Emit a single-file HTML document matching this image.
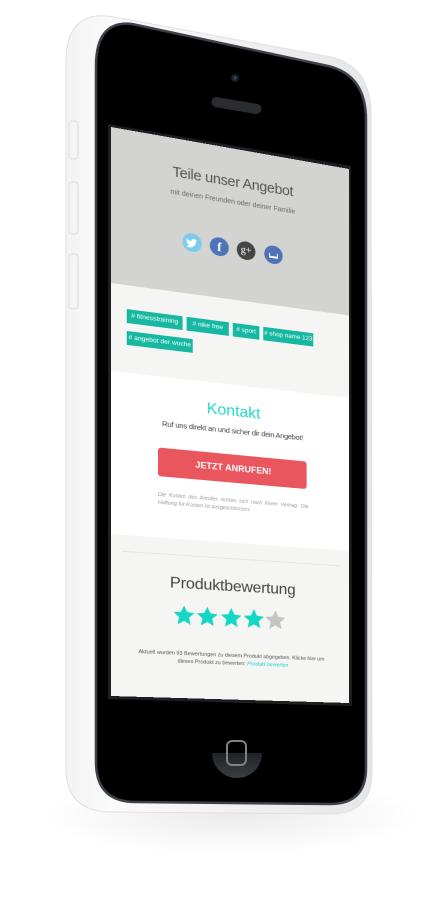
<!DOCTYPE html>
<html><head><meta charset="utf-8"><style>
html,body{margin:0;padding:0;background:#fff;width:431px;height:900px;overflow:hidden;font-family:"Liberation Sans",sans-serif}
#ph{position:absolute;left:0;top:0}
#scr{position:absolute;left:0;top:0;width:240px;height:569px;transform-origin:0 0;
transform:matrix3d(1.08698,0.22115,0,0.00027308,0,1,0,0,0,0,1,0,111,127,0,1);overflow:hidden;background:#f5f5f3}
.sec{position:absolute;left:0;width:240px}
.c{position:absolute;left:0;width:240px;text-align:center;white-space:nowrap}
.ic{position:absolute;width:19px;height:19px;border-radius:50%;top:94px;color:#fff;text-align:center;font-size:12px;line-height:19px;font-weight:bold}
.tag{position:absolute;height:14px;background:#16b8a2;color:#fff;font-size:6.5px;line-height:14px;text-align:center;white-space:nowrap}
.st{position:absolute;top:473px;width:23px;height:23px}
</style></head><body>
<svg id="ph" width="431" height="900" viewBox="0 0 431 900">
<defs>
<radialGradient id="sh" cx="0.5" cy="0.5" r="0.5"><stop offset="0" stop-color="#000" stop-opacity="0.08"/><stop offset="1" stop-color="#000" stop-opacity="0"/></radialGradient>
<linearGradient id="bd" x1="0" x2="1"><stop offset="0" stop-color="#f3f3f3"/><stop offset="0.15" stop-color="#fafafa"/><stop offset="1" stop-color="#e6e6e6"/></linearGradient>
<linearGradient id="hb" x1="0" y1="0" x2="0" y2="1"><stop offset="0" stop-color="#1f2225"/><stop offset="1" stop-color="#3a3e42"/></linearGradient>
</defs>
<ellipse cx="230" cy="815" rx="190" ry="40" fill="url(#sh)"/>
<path d="M108 16 L326 56 Q371 64 371 114 L372 772 Q372 814 330 814 L112 812 Q66 812 66 768 L66 62 Q66 12 108 16 Z" fill="url(#bd)" stroke="#e0e0e0" stroke-width="1"/>
<rect x="69" y="121" width="9" height="38" rx="3" fill="#f4f4f4" stroke="#ddd"/>
<rect x="69" y="182" width="9" height="52" rx="3" fill="#f4f4f4" stroke="#ddd"/>
<rect x="69" y="254" width="9" height="55" rx="3" fill="#f4f4f4" stroke="#ddd"/>
<path d="M132 24 L328 66 Q366 75 366 120 L366 768 Q366 804 330 804 L136 802 Q96 802 96 762 L96 66 Q96 20 132 24 Z" fill="#000" stroke="#3c4247" stroke-width="2.5"/>
<circle cx="235" cy="78" r="4" fill="#1a1d22"/><circle cx="235" cy="78" r="1.6" fill="#2c4a7a"/>
<path d="M216 97 L258 104 Q263 106 261 111 Q259 114 255 114 L215 107 Q210 104 212 100 Q213 97 216 97 Z" fill="#2a2d30"/>
<polygon points="108,124 351,166 352,706 108,699" fill="#1c1e20"/>
<path d="M212 753 A25 25 0 0 0 262 753 Z" fill="url(#hb)"/>
<rect x="227" y="741" width="19" height="24" rx="5" fill="none" stroke="#7e8287" stroke-width="2"/>
</svg>
<div id="scr">
 <div class="sec" style="top:0;height:156px;background:#d3d3d1"></div>
 <div class="sec" style="top:244px;height:163px;background:#fff"></div>
 <div class="c" style="top:27px;font-size:14.5px;color:#555;letter-spacing:-0.3px">Teile unser Angebot</div>
 <div class="c" style="top:52px;font-size:7px;color:#6a6a6a">mit deinen Freunden oder deiner Familie</div>
 <div class="ic" style="left:69px;background:#7ccbee">
  <svg width="19" height="19" viewBox="0 0 24 24"><path d="M18 8.3c-.5.2-1 .4-1.6.4.6-.3 1-.9 1.2-1.5-.5.3-1.1.6-1.8.7a2.8 2.8 0 0 0-4.8 2.5c-2.3-.1-4.4-1.2-5.8-3-.8 1.300-.3 3 .9 3.800-.5 0-.9-.1-1.300-.3 0 1.400 1 2.500 2.300 2.800-.4.1-.9.1-1.300 0 .4 1.100 1.400 1.900 2.600 1.900A5.700 5.700 0 0 1 4.200 17.200a8 8 0 0 0 12.300-7.100c.6-.4 1-.9 1.500-1.400z" fill="#fff"/></svg></div>
 <div class="ic" style="left:96px;background:#4e73b8;font-family:'Liberation Serif',serif;font-size:13px">f</div>
 <div class="ic" style="left:123px;background:#444;font-family:'Liberation Serif',serif;font-size:10px;font-weight:normal">g+</div>
 <div class="ic" style="left:151px;background:#4e73b8"><div style="position:absolute;left:5px;top:11px;width:9px;height:2px;background:#fff"></div><div style="position:absolute;left:5px;top:8px;width:1px;height:4px;background:#fff"></div><div style="position:absolute;left:13px;top:8px;width:1px;height:4px;background:#fff"></div></div>
 <div class="tag" style="left:15px;top:180px;width:54px"># fitnesstraining</div>
 <div class="tag" style="left:73px;top:180px;width:42px"># nike free</div>
 <div class="tag" style="left:119px;top:180px;width:27px"># sport</div>
 <div class="tag" style="left:150px;top:180px;width:52px"># shop name 123</div>
 <div class="tag" style="left:15px;top:202px;width:64px"># angebot der woche</div>
 <div class="c" style="top:263px;font-size:16px;color:#1dd8c8">Kontakt</div>
 <div class="c" style="top:287px;font-size:7.6px;color:#444;letter-spacing:-0.25px">Ruf uns direkt an und sicher dir dein Angebot!</div>
 <div style="position:absolute;left:45px;top:316px;width:150px;height:29px;border-radius:3px;background:#e9565d;color:#fff;font-weight:bold;font-size:9px;line-height:29px;text-align:center">JETZT ANRUFEN!</div>
 <div style="position:absolute;left:45px;top:360px;width:152px;font-size:5.3px;line-height:8px;color:#999;font-style:italic;text-align:justify">Die Kosten des Anrufes richten sich nach Ihrem Vertrag. Die Haftung für Kosten ist ausgeschlossen.</div>
 <div style="position:absolute;left:10px;top:423px;width:220px;height:1px;background:#e6e6e4"></div>
 <div class="c" style="top:444px;font-size:16px;color:#444;letter-spacing:-0.2px">Produktbewertung</div>
 <svg class="st" style="left:59px" viewBox="0 0 24 24"><path d="M12 1.5l3.2 7 7.6.8-5.7 5.1 1.6 7.5L12 18l-6.700 3.900 1.600-7.500L1.200 9.300l7.600-.8z" fill="#14d8c4"/></svg>
 <svg class="st" style="left:82px" viewBox="0 0 24 24"><path d="M12 1.5l3.2 7 7.6.8-5.7 5.1 1.6 7.5L12 18l-6.700 3.900 1.600-7.500L1.200 9.300l7.600-.8z" fill="#14d8c4"/></svg>
 <svg class="st" style="left:106px" viewBox="0 0 24 24"><path d="M12 1.5l3.2 7 7.6.8-5.7 5.1 1.6 7.5L12 18l-6.700 3.900 1.600-7.500L1.200 9.300l7.600-.8z" fill="#14d8c4"/></svg>
 <svg class="st" style="left:129px" viewBox="0 0 24 24"><path d="M12 1.5l3.2 7 7.6.8-5.7 5.1 1.6 7.5L12 18l-6.700 3.900 1.600-7.500L1.200 9.300l7.600-.8z" fill="#14d8c4"/></svg>
 <svg class="st" style="left:151px" viewBox="0 0 24 24"><path d="M12 1.5l3.2 7 7.6.8-5.7 5.1 1.6 7.5L12 18l-6.700 3.900 1.600-7.500L1.200 9.300l7.600-.8z" fill="#c4c4c4"/></svg>
 <div class="c" style="top:520px;font-size:5.4px;line-height:8px;color:#555;white-space:normal;left:25px;width:190px">Aktuell wurden 93 Bewertungen zu diesem Produkt abgegeben. Klicke hier um dieses Produkt zu bewerten: <span style="color:#14d8c4;font-style:italic">Produkt bewerten</span></div>
</div>
</body></html>
